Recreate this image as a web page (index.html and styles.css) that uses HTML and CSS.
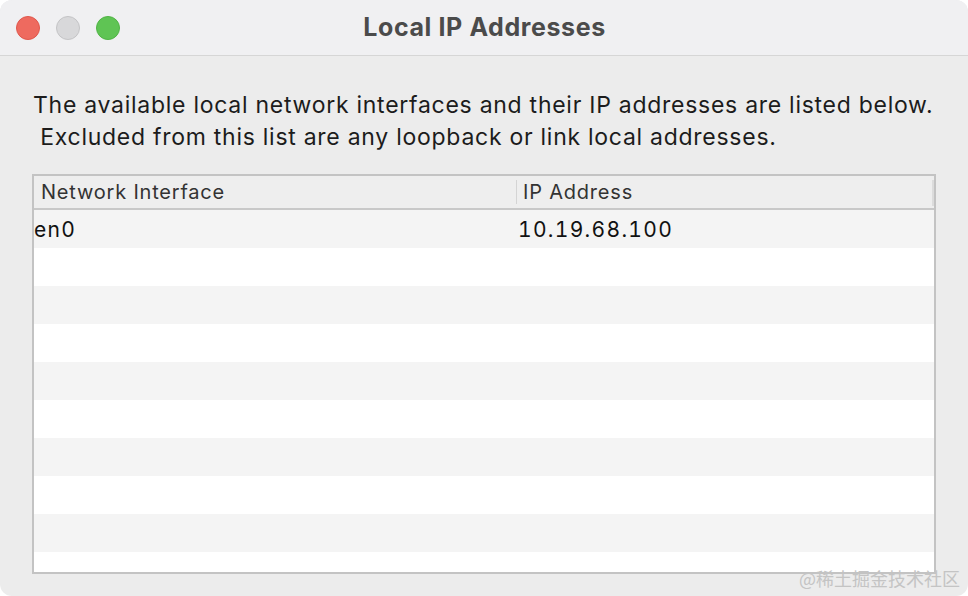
FILE: index.html
```html
<!DOCTYPE html>
<html>
<head>
<meta charset="utf-8">
<link rel="stylesheet" href="styles.css">
</head>
<body>
<div class="window">
  <div class="titlebar">
    <div class="lights">
      <span class="light red"></span>
      <span class="light gray"></span>
      <span class="light green"></span>
    </div>
    <div class="title">Local IP Addresses</div>
  </div>
  <div class="content">
    <p class="desc">The available local network interfaces and their IP addresses are listed below.<br>&nbsp;Excluded from this list are any loopback or link local addresses.</p>
    <div class="table">
      <div class="thead">
        <div class="th col1">Network Interface</div>
        <div class="th col2">IP Address</div>
        <div class="th-end"></div>
      </div>
      <div class="tbody">
        <div class="row"><div class="td col1">en0</div><div class="td col2">10.19.68.100</div></div>
        <div class="row"></div>
        <div class="row"></div>
        <div class="row"></div>
        <div class="row"></div>
        <div class="row"></div>
        <div class="row"></div>
        <div class="row"></div>
        <div class="row"></div>
        <div class="row"></div>
      </div>
    </div>
  </div>
  <div class="watermark">@稀土掘金技术社区</div>
</div>
</body>
</html>
```

FILE: styles.css
```css
html, body {
  margin: 0;
  padding: 0;
  background: #ffffff;
}
body {
  width: 968px;
  height: 596px;
  overflow: hidden;
  font-family: "Inter", "Noto Sans", "Liberation Sans", sans-serif;
}
.window {
  position: relative;
  width: 968px;
  height: 596px;
  border-radius: 12px;
  overflow: hidden;
  background: #ececec;
  display: flex;
  flex-direction: column;
}
.titlebar {
  height: 55px;
  flex: none;
  background: #f0f0f2;
  border-bottom: 1px solid #d6d6d6;
  display: flex;
  align-items: center;
  position: relative;
}
.lights {
  display: flex;
  gap: 16px;
  padding-left: 16px;
}
.light {
  width: 24px;
  height: 24px;
  border-radius: 50%;
  box-sizing: border-box;
}
.red { background: #ee6a5f; border: 1px solid #e0574c; }
.gray { background: #d8d8da; border: 1px solid #c4c4c6; }
.green { background: #5fc454; border: 1px solid #50b445; }
.title {
  position: absolute;
  left: 0;
  right: 0;
  top: 0;
  line-height: 54px;
  text-align: center;
  font-weight: 700;
  font-size: 25px;
  letter-spacing: 0.6px;
  color: #4b4b4b;
  padding-left: 1px;
}
.content {
  padding: 33px 32px 0 32px;
  display: flex;
  flex-direction: column;
}
.desc {
  margin: 0 0 21px 1px;
  font-size: 23px;
  letter-spacing: 0.73px;
  line-height: 32px;
  color: #1c1c1c;
  white-space: nowrap;
}
.table {
  width: 904px;
  height: 400px;
  box-sizing: border-box;
  border: 2px solid #c3c3c3;
  background: #ffffff;
  display: flex;
  flex-direction: column;
  overflow: hidden;
}
.thead {
  height: 32px;
  flex: none;
  display: flex;
  background: #eeeeee;
  border-bottom: 2px solid #c8c8c8;
  align-items: stretch;
}
.th {
  font-size: 20px;
  letter-spacing: 0.8px;
  color: #333333;
  line-height: 32px;
}
.thead .col1 {
  width: 482px;
  padding-left: 7px;
  box-sizing: border-box;
}
.thead .col2 {
  flex: 1;
  padding-left: 6px;
  border-left: 1px solid #d4d4d4;
  margin: 4px 0;
  line-height: 24px;
}
.th-end {
  width: 2px;
  margin: 4px 0 2px;
  background: #dcdcdc;
}
.tbody {
  flex: 1;
  display: flex;
  flex-direction: column;
}
.row {
  height: 38px;
  flex: none;
  display: flex;
  align-items: center;
}
.row:nth-child(odd) { background: #f4f4f4; }
.row:nth-child(even) { background: #ffffff; }
.td {
  font-size: 21px;
  letter-spacing: 1.3px;
  font-variant-numeric: tabular-nums;
  color: #111111;
}
.row .col1 {
  width: 484px;
  padding-left: 0;
}
.row .col2 {
  flex: 1;
}
.watermark {
  position: absolute;
  right: 8px;
  bottom: 5px;
  font-family: "Noto Sans CJK SC", sans-serif;
  font-size: 18px;
  color: #c4c4c4;
}
```
